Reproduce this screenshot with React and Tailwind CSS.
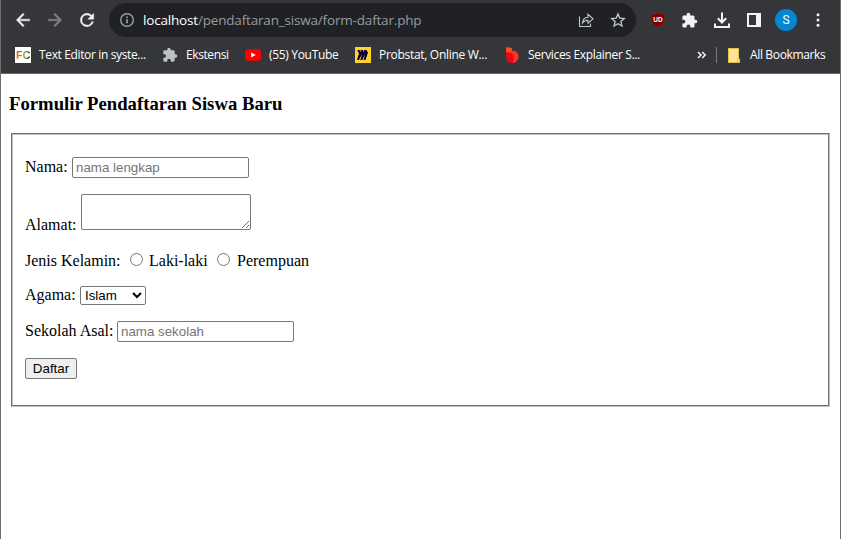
import React from "react";

const PUZZLE =
  "M20.5 11H19V7c0-1.1-.9-2-2-2h-4V3.5a2.5 2.5 0 0 0-5 0V5H4c-1.1 0-2 .9-2 2v3.8h1.5a2.7 2.7 0 0 1 0 5.4H2V20c0 1.1.9 2 2 2h3.8v-1.5a2.7 2.7 0 0 1 5.4 0V22H17c1.1 0 2-.9 2-2v-4h1.5a2.5 2.5 0 0 0 0-5z";

function Icon({ size = 20, className = "", d, children }) {
  return (
    <svg width={size} height={size} viewBox="0 0 24 24" fill="currentColor" className={`shrink-0 ${className}`}>
      {d ? <path d={d} /> : children}
    </svg>
  );
}

function Toolbar() {
  return (
    <div className="flex h-10 items-center pl-[12px] text-[#f1f3f4]">
      <Icon className="stroke-current stroke-[0.5]" d="M20 11H7.83l5.59-5.59L12 4l-8 8 8 8 1.41-1.41L7.83 13H20v-2z" />
      <Icon className="ml-3 stroke-current stroke-[0.5] text-[#818286]" d="M4 11h12.17l-5.59-5.59L12 4l8 8-8 8-1.41-1.41L16.17 13H4v-2z" />
      <Icon
        className="ml-3 stroke-current stroke-[0.5]"
        d="M17.65 6.35A7.96 7.96 0 0 0 12 4a8 8 0 1 0 7.73 10h-2.08A6 6 0 1 1 12 6c1.66 0 3.14.69 4.22 1.78L13 11h7V4l-2.35 2.35z"
      />
      <div className="ml-3 flex h-[34px] w-[527px] shrink-0 items-center rounded-full bg-[#202124] pl-[10px]">
        <svg width="16" height="16" viewBox="0 0 16 16" fill="none" stroke="#9aa0a6" strokeWidth="1.4" className="shrink-0">
          <circle cx="8" cy="8" r="6.3" />
          <path d="M8 7.2v4M8 4.4v1.5" strokeWidth="1.7" />
        </svg>
        <div className="ml-2 w-[435px] whitespace-nowrap font-['Open_Sans','Noto_Sans',sans-serif] text-[13.5px] leading-5 tracking-[-0.18px] text-[#969ba1]">
          <span className="text-white">localhost</span>/pendaftaran_siswa/form-daftar.php
        </div>
        <svg width="16" height="16" viewBox="0 0 16 16" fill="none" stroke="#c4c7c9" strokeWidth="1.1" className="shrink-0">
          <path d="M1.5 4.5v10h11v-3" />
          <path d="M4.5 11c.3-3.7 2.2-5.7 5.5-5.8V2.3l5 4.5-5 4.4V8.4C7.5 8.3 5.7 9.2 4.5 11z" />
        </svg>
        <svg width="16" height="16" viewBox="0 0 24 24" fill="none" stroke="#c4c7c9" strokeWidth="2" className="ml-4 shrink-0">
          <path d="M12 3l2.7 6.2 6.8.6-5.1 4.5 1.5 6.7-5.9-3.5L6.1 21l1.5-6.7-5.1-4.5 6.8-.6z" />
        </svg>
      </div>
      <svg width="16" height="16" viewBox="0 0 16 16" className="ml-[14px] shrink-0">
        <path d="M8 .5c2 1.2 4 1.8 6.5 1.8v5.2c0 4-2.5 6-6.5 8-4-2-6.500-4-6.500-8V2.300C4 2.300 6 1.700 8 .5z" fill="#800000" stroke="#61383a" strokeWidth=".6" />
        <text x="7.900" y="9.500" textAnchor="middle" fill="#fff" fontSize="6.500" fontWeight="700" className="font-['Liberation_Sans',sans-serif]">
          UD
        </text>
      </svg>
      <Icon size={17} className="ml-[15px]" d={PUZZLE} />
      <svg width="18" height="18" viewBox="0 0 18 18" fill="none" stroke="currentColor" strokeWidth="2" className="ml-[15px] shrink-0">
        <path d="M9 1.500v9.500M4.800 7.300L9 11.500l4.200-4.200M2 12.500V16h14v-3.500" />
      </svg>
      <svg width="14" height="14" viewBox="0 0 14 14" className="ml-4 shrink-0">
        <path d="M0 0h14v14H0zM2 2v10h7V2z" fill="currentColor" fillRule="evenodd" />
      </svg>
      <div className="ml-[14px] flex size-[22px] shrink-0 items-center justify-center rounded-full bg-[#0288d1] font-['Roboto',sans-serif] text-[12px] text-white">S</div>
      <Icon size={18} className="ml-[12px]">
        <circle cx="12" cy="5" r="2" />
        <circle cx="12" cy="12" r="2" />
        <circle cx="12" cy="19" r="2" />
      </Icon>
    </div>
  );
}

function Bookmarks() {
  return (
    <div className="flex h-[30px] items-center whitespace-nowrap pl-[14px] font-['Open_Sans','Noto_Sans',sans-serif] text-[12px] leading-4 text-white">
      <div className="flex size-4 shrink-0 items-center justify-center bg-white font-['Liberation_Sans',sans-serif] text-[11px] font-bold tracking-[-0.3px]">
        <span className="bg-linear-to-b from-[#e52620] to-[#f58a22] bg-clip-text text-transparent">F</span>
        <span className="bg-linear-to-r from-[#f1a21c] via-[#36a535] to-[#17301b] bg-clip-text text-transparent">C</span>
      </div>
      <span className="ml-2 w-[123px] shrink-0 tracking-[-0.36px]">Text Editor in syste...</span>
      <Icon size={16} className="text-[#bdc1c6]" d={PUZZLE} />
      <span className="ml-2 w-[59px] shrink-0 tracking-[-0.4px]">Ekstensi</span>
      <svg width="16" height="16" viewBox="0 0 16 16" className="shrink-0">
        <rect x="0" y="2.300" width="16" height="11.400" rx="3" fill="#f00" />
        <path d="M6.200 5.500v5L10.800 8z" fill="#fff" />
      </svg>
      <span className="ml-2 w-[86px] shrink-0 tracking-[-0.32px]">(55) YouTube</span>
      <svg width="16" height="16" viewBox="0 0 16 16" className="shrink-0">
        <rect width="16" height="16" fill="#ffd02f" />
        <path d="M2.500 3h2l1.100 2.200L5.700 3h2l1.200 2.200L9 3h2.200l1.800 2.600L10.500 13h-2l1.700-6.200L7.300 13h-2L7 6.800 4 13H2l2-6.500z" fill="#050038" />
        <path d="M3 3.500l2 3M6.500 3.500l1.700 3M10 3.500l2 2" stroke="#050038" strokeWidth="1.300" />
      </svg>
      <span className="ml-2 w-[125px] shrink-0 tracking-[-0.3px]">Probstat, Online W...</span>
      <svg width="16" height="16" viewBox="0 0 16 16" className="shrink-0">
        <path d="M2 0l6 1v5H2z" fill="#f4511e" />
        <path d="M2 6l6-2c4-1 6.500 2 6.500 5.500S12 16 8.500 16z" fill="#ff3324" />
        <path d="M2 5l6 1.500c2 3 2.500 6 .5 9.500C4 16 2 13 2 9.500z" fill="#e50914" />
      </svg>
      <span className="ml-2 w-[169px] shrink-0 tracking-[-0.34px]">Services Explainer S...</span>
      <svg width="10" height="8" viewBox="0 0 10 8" fill="none" stroke="#f1f3f4" strokeWidth="1.600" className="shrink-0">
        <path d="M1 1l3 3-3 3M5.200 1l3 3-3 3" />
      </svg>
      <div className="ml-[9px] h-4 w-px shrink-0 bg-[#77797d]" />
      <svg width="12" height="15" viewBox="0 0 12 15" className="ml-[11px] shrink-0">
        <path d="M0 0h11v10.500h1V15H0z" fill="#e8bc46" />
        <path d="M1 1h9v9.500H9V14H1z" fill="#ffe595" />
        <path d="M10 11h1v3h-1z" fill="#ffe595" />
      </svg>
      <span className="ml-[10px] tracking-[-0.35px]">All Bookmarks</span>
    </div>
  );
}

const FIELD =
  "shrink-0 rounded-[2px] border border-[#767676] bg-white font-['Liberation_Sans',Arial,sans-serif] text-[13.333px] leading-[15px] text-black outline-none";

function Radio() {
  return <input type="radio" name="jenis_kelamin" className="mt-px size-[13px] shrink-0" />;
}

export default function App() {
  return (
    <div className="flex h-[539px] w-[841px] flex-col overflow-hidden border-x border-[#6f6f6f] bg-white">
      <header className="h-[74px] shrink-0 border-b border-[#67696c] bg-[#35363a]">
        <Toolbar />
        <Bookmarks />
      </header>
      <main className="flex flex-col pl-2 pr-[10px] pt-[19px] font-['Liberation_Serif','Times_New_Roman',serif] text-[16px] leading-[18px] text-black">
        <h3 className="h-[22px] whitespace-nowrap text-[18.72px] font-bold leading-[22px]">Formulir Pendaftaran Siswa Baru</h3>
        <form className="ml-[2px] mt-[18px] h-[274px] border border-b-[#c0c0c0] border-l-[#707070] border-r-[#c0c0c0] border-t-[#707070]">
          <div className="flex h-full flex-col whitespace-nowrap border border-b-[#707070] border-l-[#c0c0c0] border-r-[#707070] border-t-[#c0c0c0] pl-3 pt-[22px]">
            <div className="flex h-[21px]">
              <label className="mt-px w-[47px]">Nama:</label>
              <input type="text" placeholder="nama lengkap" className={`${FIELD} h-[21px] w-[177px] px-[3px] placeholder:text-[#757575]`} />
            </div>
            <div className="mt-4 flex h-9">
              <label className="mt-[22px] w-[56px]">Alamat:</label>
              <textarea className={`${FIELD} h-9 w-[170px] resize p-[2px]`} />
            </div>
            <div className="mt-[22px] flex h-[18px]">
              <label className="w-[105px]">Jenis Kelamin:</label>
              <Radio />
              <label className="ml-[6px] w-[68px]">Laki-laki</label>
              <Radio />
              <label className="ml-[7px]">Perempuan</label>
            </div>
            <div className="mt-4 flex h-[19px]">
              <label className="w-[55px]">Agama:</label>
              <select className={`${FIELD} h-[19px] w-[66px]`}>
                <option>Islam</option>
              </select>
            </div>
            <div className="mt-4 flex h-[21px]">
              <label className="mt-px w-[92px]">Sekolah Asal:</label>
              <input type="text" placeholder="nama sekolah" className={`${FIELD} h-[21px] w-[177px] px-[3px] placeholder:text-[#757575]`} />
            </div>
            <button
              type="button"
              className="mt-4 h-[21px] w-[52px] rounded-[2px] border border-[#767676] bg-[#efefef] font-['Liberation_Sans',Arial,sans-serif] text-[13.333px] leading-[15px]"
            >
              Daftar
            </button>
          </div>
        </form>
      </main>
    </div>
  );
}
